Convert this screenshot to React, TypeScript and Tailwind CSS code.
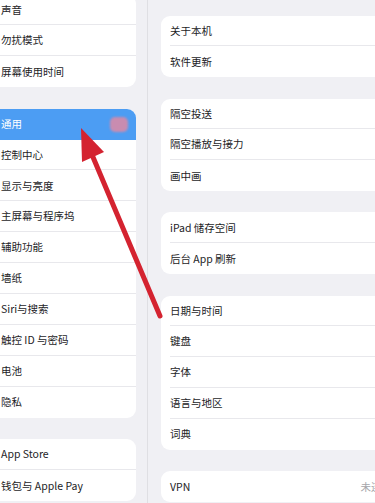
// Settings > 通用 screenshot
const font = { fontFamily: '"Noto Sans CJK SC", "Noto Sans", sans-serif' };

type Item = { label: string; active?: boolean; badge?: boolean; value?: string };

const sideGroups: Item[][] = [
  [{ label: '声音' }, { label: '勿扰模式' }, { label: '屏幕使用时间' }],
  [
    { label: '通用', active: true, badge: true },
    { label: '控制中心' },
    { label: '显示与亮度' },
    { label: '主屏幕与程序坞' },
    { label: '辅助功能' },
    { label: '墙纸' },
    { label: 'Siri与搜索' },
    { label: '触控 ID 与密码' },
    { label: '电池' },
    { label: '隐私' },
  ],
  [{ label: 'App Store' }, { label: '钱包与 Apple Pay' }],
];

const mainGroups: Item[][] = [
  [{ label: '关于本机' }, { label: '软件更新', badge: true }],
  [{ label: '隔空投送' }, { label: '隔空播放与接力' }, { label: '画中画' }],
  [{ label: 'iPad 储存空间' }, { label: '后台 App 刷新' }],
  [{ label: '日期与时间' }, { label: '键盘' }, { label: '字体' }, { label: '语言与地区' }, { label: '词典' }],
  [{ label: 'VPN', value: '未连接' }],
];

const SideGroup = ({ items }: { items: Item[] }) => (
  <div className="bg-white rounded-r-[9px] overflow-hidden">
    {items.map((it, i) => (
      <div
        key={it.label}
        className={`h-[30.9px] flex items-center pl-[1px] pr-[8px] text-[10.5px] ${
          it.active ? 'bg-[#4c9df3] text-white' : 'text-[#1d1d1f]'
        } ${i < items.length - 1 && !it.active ? 'border-b border-[#e8e8ec]' : ''}`}
      >
        <span>{it.label}</span>
        {it.badge && <span className="ml-auto w-[18px] h-[15px] rounded-[5px] bg-[#c98cb0] blur-[1px]" />}
      </div>
    ))}
  </div>
);

const MainGroup = ({ items }: { items: Item[] }) => (
  <div className="bg-white rounded-l-[9px] pl-[9px]">
    {items.map((it, i) => (
      <div
        key={it.label}
        className={`h-[30.8px] flex items-center pr-[30px] text-[10.5px] text-[#1d1d1f] ${
          i < items.length - 1 ? 'border-b border-[#e8e8ec]' : ''
        }`}
      >
        <span>{it.label}</span>
        {it.value && <span className="ml-auto mr-[-14px] text-[#a5a5aa]">{it.value}</span>}
        {it.badge && <span className="ml-auto mr-[-32px] w-[16px] h-[15px] rounded-[5px] bg-[#f08a88] blur-[1px]" />}
      </div>
    ))}
  </div>
);

export default function App() {
  return (
    <div className="relative w-[375px] h-[503px] overflow-hidden bg-[#f0f0f4] flex" style={font}>
      <aside className="w-[148px] shrink-0 border-r border-[#dfdfe3] pr-[11px] mt-[-5.5px] flex flex-col gap-[21.5px]">
        {sideGroups.map((g, i) => (
          <SideGroup key={i} items={g} />
        ))}
      </aside>
      <main className="w-[260px] shrink-0 pl-[13px] pt-[15.5px] flex flex-col gap-[21.5px]">
        {mainGroups.map((g, i) => (
          <MainGroup key={i} items={g} />
        ))}
      </main>
      <svg className="absolute inset-0 pointer-events-none" width="375" height="503" viewBox="0 0 375 503">
        <line x1="160" y1="316" x2="90" y2="150" stroke="#d42330" strokeWidth="5" strokeLinecap="round" />
        <polygon points="81,128 104,152 82,162" fill="#d42330" />
      </svg>
    </div>
  );
}
